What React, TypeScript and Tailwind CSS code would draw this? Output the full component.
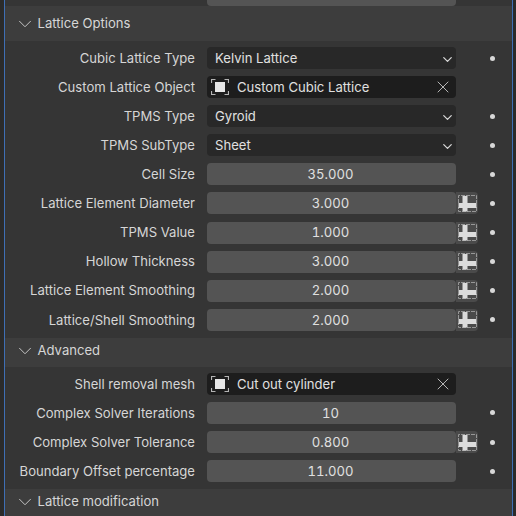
import React from "react";
import { ChevronDown, X } from "lucide-react";

const font = "font-['Inter','Noto_Sans',sans-serif]";

const ObjectIcon = () => (
  <svg width="18" height="18" viewBox="0 0 18 18" className="shrink-0" fill="none">
    <rect x="4" y="4" width="10" height="10" fill="#e6e6e6" />
    <path
      d="M0.500 5V1.500H4.500M13.500 1.500H17.500V5M17.500 13V16.500H13.500M4.500 16.500H0.500V13"
      stroke="#b4b4b4"
      strokeWidth="1.200"
    />
  </svg>
);

const DecorateIcon = () => (
  <svg width="19" height="17" viewBox="0 0 19 17" fill="none" className="opacity-90">
    <path d="M0.500 8V0.500H18.500V8M18.500 12V16.500H0.500V12" stroke="#a0a0a0" strokeWidth="1" strokeDasharray="4 1" />
    <rect x="4.500" y="1" width="5" height="15.500" fill="#ececec" />
    <rect x="0.500" y="8" width="18" height="5" fill="#ececec" />
  </svg>
);

const Dot = ({ show = true }: { show?: boolean }) => (
  <div className="w-[28px] flex justify-center">
    {show && <div className="w-[5px] h-[5px] rounded-full bg-[#d8d8d8]" />}
  </div>
);

const Row = ({
  label,
  children,
  decorate,
  dot = true,
}: {
  label: string;
  children: React.ReactNode;
  decorate?: boolean;
  dot?: boolean;
}) => (
  <div className="flex items-center h-[22px]">
    <div className="w-[190px] pt-[1px] text-right text-[13.100px] text-[#d6d6d6] whitespace-nowrap">{label}</div>
    <div className="ml-[12px] w-[249px] h-full">{children}</div>
    <div className="w-[22px] h-full">
      {decorate && (
        <div className="h-full rounded-r-[4px] bg-[#4a4a4a] flex items-center justify-center">
          <DecorateIcon />
        </div>
      )}
    </div>
    <Dot show={dot} />
  </div>
);

const Select = ({ value }: { value: string }) => (
  <div className="h-full rounded-[4px] bg-[#282828] flex items-center justify-between pl-[8px] pr-[1px] text-[13.100px] text-[#e0e0e0]">
    <span className="pt-[1px]">{value}</span>
    <ChevronDown size={15} strokeWidth={2} className="text-[#d8d8d8] translate-y-[1px]" />
  </div>
);

const ObjectField = ({ value }: { value: string }) => (
  <div className="h-full rounded-[4px] bg-[#1d1d1d] flex items-center pl-[4px] pr-[3px] text-[13.100px] text-[#e0e0e0]">
    <ObjectIcon />
    <span className="ml-[8px] pt-[1px] flex-1">{value}</span>
    <X size={20} strokeWidth={1.100} className="text-[#c4c4c4]" />
  </div>
);

const NumberField = ({ value }: { value: string }) => (
  <div className="h-full pt-[1px] pr-[2px] rounded-[4px] bg-[#545454] flex items-center justify-center text-[13.100px] tabular-nums text-[#e0e0e0]">
    {value}
  </div>
);

const Header = ({ title, className }: { title: string; className: string }) => (
  <div className={`flex items-center bg-[#3d3d3d] pl-[8.500px] text-[13.100px] text-[#d6d6d6] ${className}`}>
    <ChevronDown size={22} strokeWidth={1} className="text-[#d0d0d0]" />
    <span className="ml-[2px]">{title}</span>
  </div>
);

export default function App() {
  return (
    <div className={`w-[516px] h-[516px] overflow-hidden bg-[#2b2b2b] pl-[4px] pr-[3px] ${font}`}>
      <div className="h-full border-x border-[#3f6fb5] bg-[#353535] flex flex-col">
        {/* clipped row from the panel above */}
        <div className="h-[6px] relative overflow-hidden shrink-0">
          <div className="absolute left-[202px] bottom-0 w-[249px] h-[22px] rounded-[4px] bg-[#545454]" />
        </div>
        <Header title="Lattice Options" className="h-[35px] shrink-0" />
        <div className="flex flex-col gap-[7.100px] pt-[6px] pb-[7px] shrink-0">
          <Row label="Cubic Lattice Type"><Select value="Kelvin Lattice" /></Row>
          <Row label="Custom Lattice Object" dot={false}><ObjectField value="Custom Cubic Lattice" /></Row>
          <Row label="TPMS Type"><Select value="Gyroid" /></Row>
          <Row label="TPMS SubType"><Select value="Sheet" /></Row>
          <Row label="Cell Size"><NumberField value="35.000" /></Row>
          <Row label="Lattice Element Diameter" decorate><NumberField value="3.000" /></Row>
          <Row label="TPMS Value" decorate><NumberField value="1.000" /></Row>
          <Row label="Hollow Thickness" decorate><NumberField value="3.000" /></Row>
          <Row label="Lattice Element Smoothing" decorate><NumberField value="2.000" /></Row>
          <Row label="Lattice/Shell Smoothing" decorate><NumberField value="2.000" /></Row>
        </div>
        <Header title="Advanced" className="h-[29px] pb-[3px] shrink-0" />
        <div className="flex flex-col gap-[7.100px] pt-[6px] pb-[7px] shrink-0">
          <Row label="Shell removal mesh" dot={false}><ObjectField value="Cut out cylinder" /></Row>
          <Row label="Complex Solver Iterations"><NumberField value="10" /></Row>
          <Row label="Complex Solver Tolerance" decorate><NumberField value="0.800" /></Row>
          <Row label="Boundary Offset percentage"><NumberField value="11.000" /></Row>
        </div>
        <Header title="Lattice modification" className="flex-1 pb-[1px]" />
      </div>
    </div>
  );
}
